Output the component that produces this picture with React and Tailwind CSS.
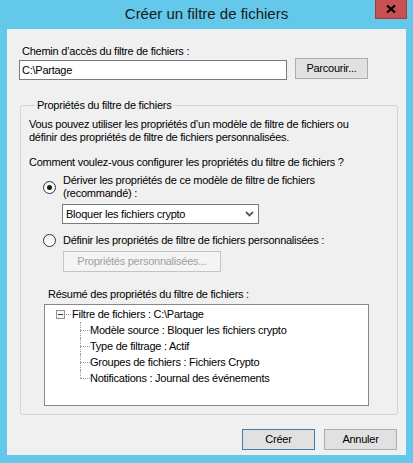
import React from 'react'

const font = { fontFamily: '"Liberation Sans", Arial, sans-serif' }

function Radio({ checked }) {
  return (
    <span className="flex h-[13px] w-[13px] shrink-0 items-center justify-center rounded-full border border-[#333333] bg-gradient-to-b from-[#f2f2f2] to-[#ffffff]">
      {checked ? <span className="h-[5px] w-[5px] rounded-full bg-[#1a1a1a]" /> : null}
    </span>
  )
}

function Button({ children, primary, disabled, className = '' }) {
  const border = primary ? 'border-[#3c7fb1]' : disabled ? 'border-[#c4c4c4]' : 'border-[#adadad]'
  const bg = disabled ? 'bg-[#f4f4f4] text-[#a0a0a0]' : 'bg-[#e1e1e1] text-black'
  return (
    <div className={`flex h-[21px] items-center justify-center border ${border} ${bg} ${className}`}>
      {children}
    </div>
  )
}

function TreeChild({ label, last }) {
  return (
    <div className="flex h-[16px] items-center pl-[35px]">
      <div className="flex h-[16px] w-[10px] shrink-0 flex-col">
        <div className="h-[8px] border-l border-dotted border-[#a0a0a0]" />
        <div
          className={`h-[8px] border-t border-dotted border-[#a0a0a0] ${last ? '' : 'border-l'}`}
        />
      </div>
      <span className="leading-[13px]">{label}</span>
    </div>
  )
}

export default function App() {
  return (
    <div
      className="flex h-[463px] w-[413px] flex-col bg-[#63c8e9] text-[11px] tracking-[-0.25px] text-black"
      style={font}
    >
      <div className="relative flex h-[29px] shrink-0 items-center justify-center">
        <span className="text-[15px] tracking-normal text-[#1a1a1a]">Créer un filtre de fichiers</span>
        <div className="absolute right-[6px] top-0 flex h-[19px] w-[32px] items-center justify-center border border-t-0 border-[#a33a3a] bg-[#c75050]">
          <svg width="10" height="8" viewBox="0 0 10 8">
            <path d="M1 0.5 L9 7.5 M9 0.5 L1 7.5" stroke="#000" strokeWidth="2.2" />
          </svg>
        </div>
      </div>

      <div className="mx-[7px] flex h-[426px] flex-col bg-[#f0f0f0]">
        <div className="ml-[15px] mt-[16px] leading-[13px]">Chemin d’accès du filtre de fichiers :</div>
        <div className="flex items-start">
          <div className="ml-[12px] mt-[2px] flex h-[20px] w-[268px] items-center border border-[#7a7a7a] bg-white pl-[2px]">
            C:\Partage
          </div>
          <Button className="ml-[8px] w-[73px]">Parcourir...</Button>
        </div>

        <fieldset className="ml-[13px] mt-[18px] w-[378px] rounded-[3px] border border-[#d5d5d5] pb-[8px] pl-[8px]">
          <legend className="ml-[6px] px-[2px] leading-[14px]">Propriétés du filtre de fichiers</legend>
          <p className="mt-[6px] leading-[13px]">
            Vous pouvez utiliser les propriétés d’un modèle de filtre de fichiers ou
            <br />
            définir des propriétés de filtre de fichiers personnalisées.
          </p>
          <div className="mt-[12px] leading-[13px]">
            Comment voulez-vous configurer les propriétés du filtre de fichiers ?
          </div>

          <div className="ml-[14px] mt-[5px] flex items-center gap-[7px]">
            <Radio checked />
            <div className="leading-[13px]">
              Dériver les propriétés de ce modèle de filtre de fichiers
              <br />
              (recommandé) :
            </div>
          </div>
          <div className="ml-[33px] mt-[4px] flex h-[20px] w-[197px] items-center justify-between border border-[#7a7a7a] bg-white pl-[3px] pr-[4px]">
            <span>Bloquer les fichiers crypto</span>
            <svg width="9" height="6" viewBox="0 0 9 6">
              <path d="M1 1 L4.5 4.5 L8 1" fill="none" stroke="#5a5a5a" strokeWidth="1.8" />
            </svg>
          </div>

          <div className="ml-[14px] mt-[10px] flex items-center gap-[7px]">
            <Radio />
            <div className="leading-[13px]">Définir les propriétés de filtre de fichiers personnalisées :</div>
          </div>
          <Button disabled className="ml-[34px] mt-[4px] w-[158px]">
            Propriétés personnalisées...
          </Button>

          <div className="ml-[19px] mt-[16px] leading-[13px]">Résumé des propriétés du filtre de fichiers :</div>
          <div className="ml-[15px] mt-[3px] h-[102px] w-[325px] border border-[#828790] bg-white pt-[1px]">
            <div className="flex h-[16px] items-center pl-[11px]">
              <div className="flex h-[9px] w-[9px] shrink-0 items-center justify-center border border-[#919191] bg-[#f7f7f7]">
                <div className="h-px w-[5px] bg-[#333]" />
              </div>
              <div className="ml-[1px] w-[5px] border-t border-dotted border-[#a0a0a0]" />
              <span className="ml-[1px] leading-[13px]">Filtre de fichiers : C:\Partage</span>
            </div>
            <TreeChild label="Modèle source : Bloquer les fichiers crypto" />
            <TreeChild label="Type de filtrage : Actif" />
            <TreeChild label="Groupes de fichiers : Fichiers Crypto" />
            <TreeChild label="Notifications : Journal des événements" last />
          </div>
        </fieldset>

        <div className="mt-[14px] flex justify-end gap-[9px] pr-[9px]">
          <Button primary className="w-[73px]">Créer</Button>
          <Button className="w-[73px]">Annuler</Button>
        </div>
      </div>
    </div>
  )
}
